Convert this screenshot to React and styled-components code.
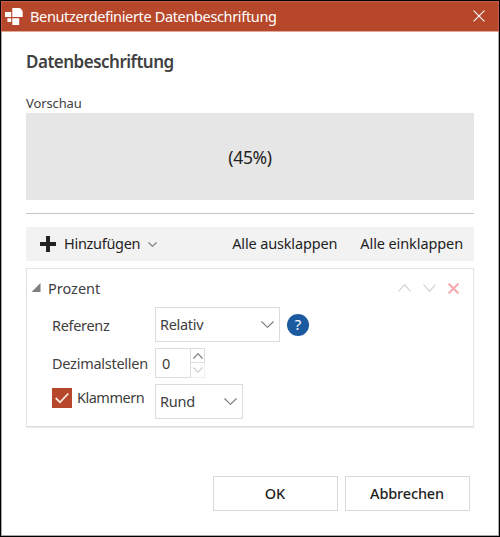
import React from 'react';
import styled, { createGlobalStyle } from 'styled-components';

const GlobalStyle = createGlobalStyle`
  * {
    box-sizing: border-box;
  }
  body {
    margin: 0;
    background: #fff;
    font-family: "Noto Sans", "Open Sans", sans-serif;
  }
  svg {
    display: block;
    flex: none;
  }
`;

const Label = styled.span`
  font-size: ${({ $size }) => $size || 14.5}px;
  font-weight: ${({ $weight }) => $weight || 400};
  letter-spacing: ${({ $spacing }) => $spacing || 0}px;
  line-height: 20px;
  color: ${({ $color }) => $color || '#404040'};
  white-space: nowrap;
`;

const Window = styled.div`
  display: flex;
  flex-direction: column;
  width: 500px;
  height: 537px;
  border: 1px solid #000;
  background: #fff;
`;

const Frame = styled.div`
  display: flex;
  flex-direction: column;
  flex: 1;
  border: solid #a8a8a8;
  border-width: 0 1px 1px;
`;

const TitleBar = styled.header`
  display: flex;
  align-items: center;
  height: 31px;
  margin: 0 -1px;
  padding: 0 13px 0 3px;
  border: 1px solid #c4604a;
  border-bottom-color: #dfa99b;
  background: #b7472a;
`;

const Title = styled(Label)`
  flex: 1;
  margin-left: 7px;
  padding-bottom: 2px;
`;

const IconButton = styled.button`
  display: flex;
  padding: 0 0 1px;
  border: 0;
  background: none;
`;

const Content = styled.main`
  display: flex;
  flex-direction: column;
  flex: 1;
  padding: 20px 24px 0;
`;

const Heading = styled(Label)`
  margin: 0;
`;

const Caption = styled(Label)`
  margin-top: 21px;
`;

const Preview = styled.div`
  display: flex;
  align-items: center;
  justify-content: center;
  height: 87px;
  background: #e6e6e6;
`;

const Divider = styled.hr`
  width: 100%;
  height: 1px;
  margin: 13px 0;
  border: 0;
  background: #c6c6c6;
`;

const Toolbar = styled.div`
  display: flex;
  align-items: center;
  height: 34px;
  padding: 0 11px 0 14px;
  background: #f2f2f2;
`;

const ToolButton = styled.button`
  display: flex;
  align-items: center;
  gap: 8px;
  margin-left: ${({ $push }) => ($push ? 'auto' : '0')};
  padding: 0;
  border: 0;
  background: none;
  font-family: inherit;

  & + & + & {
    margin-left: 23px;
  }
  ${Label} {
    padding-bottom: 2px;
  }
`;

const Panel = styled.section`
  height: 159px;
  margin-top: 7px;
  padding-top: 9px;
  border: 1px solid #e4e4e4;
  border-bottom-color: #dadada;
  box-shadow: 0 1px 1px #ececec;
`;

const PanelHeader = styled.div`
  display: flex;
  align-items: center;
  height: 20px;
  padding: 0 14px 0 4px;
`;

const PanelTitle = styled(Label)`
  flex: 1;
  margin-left: 7px;
`;

const PanelActions = styled.div`
  display: flex;
  align-items: center;
  gap: 12px;
`;

const Fields = styled.div`
  display: grid;
  grid-template-columns: 103px auto;
  grid-template-rows: 35px 30px 35px;
  row-gap: 6px;
  margin-top: 9px;
  padding-left: 25px;
`;

const FieldName = styled.label`
  display: flex;
  align-items: center;
  gap: 5px;
  padding-top: ${({ $drop }) => $drop || 0}px;
`;

const CheckField = styled(FieldName)`
  align-items: flex-start;

  ${Label} {
    margin-top: -1px;
  }
`;

const Control = styled.div`
  display: flex;
  align-items: center;
  gap: 7px;
`;

const Select = styled.div`
  display: flex;
  align-items: center;
  justify-content: space-between;
  width: ${({ $width }) => $width}px;
  height: 35px;
  padding: 0 5px 0 4px;
  border: 1px solid #dcdcdc;

  ${Label} {
    padding-bottom: 2px;
  }
`;

const Spinner = styled.div`
  display: flex;
  width: 50px;
  height: 30px;
`;

const SpinnerValue = styled.div`
  display: flex;
  align-items: center;
  flex: 1;
  padding-left: 6px;
  border: 1px solid #dcdcdc;
`;

const SpinnerButtons = styled.div`
  display: flex;
  flex-direction: column;
  width: 14px;
`;

const StepButton = styled.button`
  display: flex;
  align-items: center;
  justify-content: center;
  height: 15px;
  padding: 0;
  border: 1px solid ${({ disabled }) => (disabled ? '#f0f0f0' : '#dcdcdc')};
  border-width: ${({ disabled }) => (disabled ? '0 1px 1px 0' : '1px 1px 1px 0')};
  background: #fff;
`;

const Checkbox = styled.span`
  display: flex;
  align-items: center;
  justify-content: center;
  width: 20px;
  height: 20px;
  background: #b7472a;
`;

const Help = styled.span`
  display: flex;
  align-items: center;
  justify-content: center;
  width: 22px;
  height: 22px;
  padding-bottom: 1px;
  border-radius: 50%;
  background: #1c5aa0;
`;

const Footer = styled.footer`
  display: flex;
  justify-content: flex-end;
  gap: 7px;
  margin-top: 49px;
  padding-right: 4px;
`;

const DialogButton = styled.button`
  display: flex;
  align-items: center;
  justify-content: center;
  width: 125px;
  height: 35px;
  padding: 0 1px 1px 0;
  border: 1px solid #d9d9d9;
  background: #fff;
  font-family: inherit;
`;

function Chevron({ width = 13, height = 7, color = '#777', up }) {
  const middle = width / 2;
  const d = up
    ? `M.5 ${height - 0.5}L${middle} .7L${width - 0.5} ${height - 0.5}`
    : `M.5 .5L${middle} ${height - 0.7}L${width - 0.5} .5`;
  return (
    <svg width={width} height={height} fill="none" stroke={color} strokeWidth="1.1">
      <path d={d} />
    </svg>
  );
}

function Cross({ size, color, strokeWidth }) {
  return (
    <svg width={size} height={size} fill="none" stroke={color} strokeWidth={strokeWidth}>
      <path d={`M.6 .6L${size - 0.6} ${size - 0.6}M${size - 0.6} .6L.6 ${size - 0.6}`} />
    </svg>
  );
}

function AppLogo() {
  return (
    <svg width="18" height="17" fill="#fff">
      <path d="M7.3 0H14.5Q17.7 1.5 17.7 4.5V9H7.3z" />
      <path d="M0 4h6.2v5H0zM2.4 10.2h3.8v3.8H2.4zM7.3 10.2h6.9V17H7.3z" />
    </svg>
  );
}

export default function App() {
  return (
    <Window>
      <GlobalStyle />
      <Frame>
        <TitleBar>
          <AppLogo />
          <Title $color="#fff" $spacing={-0.35}>Benutzerdefinierte Datenbeschriftung</Title>
          <IconButton aria-label="Schließen">
            <Cross size={12} color="#fff" strokeWidth="1.1" />
          </IconButton>
        </TitleBar>
        <Content>
          <Heading as="h1" $size={17} $weight={600} $spacing={-0.5}>Datenbeschriftung</Heading>
          <Caption $size={13} $spacing={-0.12}>Vorschau</Caption>
          <Preview>
            <Label $size={17.5} $spacing={-0.3} $color="#222">(45%)</Label>
          </Preview>
          <Divider />
          <Toolbar>
            <ToolButton>
              <svg width="16" height="16" fill="#222">
                <path d="M6 0h4v6h6v4h-6v6H6v-6H0V6h6z" />
              </svg>
              <Label $color="#1e1e1e" $spacing={-0.3}>Hinzufügen</Label>
              <Chevron width={9} height={5} />
            </ToolButton>
            <ToolButton $push>
              <Label $color="#1e1e1e" $spacing={-0.15}>Alle ausklappen</Label>
            </ToolButton>
            <ToolButton>
              <Label $color="#1e1e1e" $spacing={-0.1}>Alle einklappen</Label>
            </ToolButton>
          </Toolbar>
          <Panel>
            <PanelHeader>
              <svg width="10" height="10" fill="#808080">
                <path d="M9.5 0v9H.5z" />
              </svg>
              <PanelTitle>Prozent</PanelTitle>
              <PanelActions>
                <Chevron width={13} height={8} color="#ccc" up />
                <Chevron width={13} height={8} color="#ccc" />
                <Cross size={11} color="#f5a9ae" strokeWidth="2" />
              </PanelActions>
            </PanelHeader>
            <Fields>
              <FieldName $drop={1}>
                <Label $spacing={-0.33}>Referenz</Label>
              </FieldName>
              <Control>
                <Select $width={125}>
                  <Label $spacing={-0.3}>Relativ</Label>
                  <Chevron />
                </Select>
                <Help>
                  <Label $size={15} $color="#fff">?</Label>
                </Help>
              </Control>
              <FieldName>
                <Label $spacing={-0.26}>Dezimalstellen</Label>
              </FieldName>
              <Spinner>
                <SpinnerValue>
                  <Label>0</Label>
                </SpinnerValue>
                <SpinnerButtons>
                  <StepButton>
                    <Chevron width={10} height={6} up />
                  </StepButton>
                  <StepButton disabled>
                    <Chevron width={10} height={6} color="#ccc" />
                  </StepButton>
                </SpinnerButtons>
              </Spinner>
              <CheckField $drop={4}>
                <Checkbox>
                  <svg width="14" height="12" fill="none" stroke="#fbe9e4" strokeWidth="1.8">
                    <path d="M.7 6L5 10.3L13.3 1.5" />
                  </svg>
                </Checkbox>
                <Label $spacing={-0.5}>Klammern</Label>
              </CheckField>
              <Select $width={88}>
                <Label $spacing={-0.25}>Rund</Label>
                <Chevron />
              </Select>
            </Fields>
          </Panel>
          <Footer>
            <DialogButton>
              <Label $color="#1e1e1e" $weight={500}>OK</Label>
            </DialogButton>
            <DialogButton>
              <Label $color="#1e1e1e" $weight={500} $spacing={-0.15}>Abbrechen</Label>
            </DialogButton>
          </Footer>
        </Content>
      </Frame>
    </Window>
  );
}
